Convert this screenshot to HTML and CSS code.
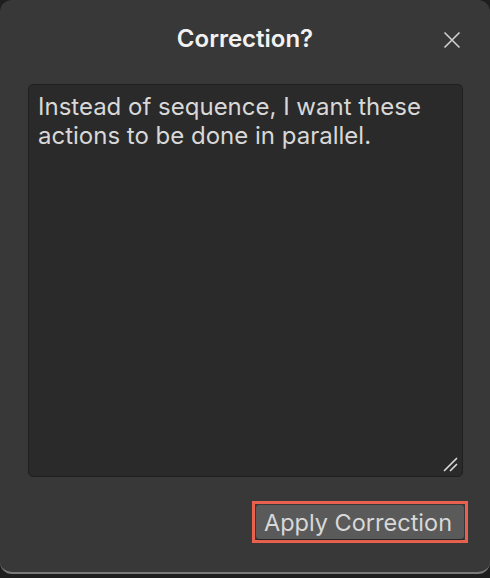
FILE: index.html
```html
<!DOCTYPE html>
<html>
<head>
<meta charset="utf-8">
<link rel="stylesheet" href="styles.css">
</head>
<body>
<div class="dialog">
  <div class="header">
    <h1 class="title">Correction?</h1>
    <button class="close" aria-label="Close">
      <svg width="18" height="18" viewBox="0 0 18 18"><path d="M1.5 1.5 L16.5 16.5 M16.5 1.5 L1.5 16.5" stroke="#cfcfcf" stroke-width="1.6" fill="none"/></svg>
    </button>
  </div>
  <div class="content">
    <div class="field">
      <div class="text">Instead of sequence, I want these actions to be done in parallel.</div>
      <svg class="grip" width="15" height="15" viewBox="0 0 15 15"><path d="M1.5 13.5 L13.5 1.5 M7.5 13.5 L13.5 7.5" stroke="#d8d8d8" stroke-width="1.7" stroke-linecap="round" fill="none"/></svg>
    </div>
  </div>
  <div class="footer">
    <div class="focus">
      <button class="apply">Apply Correction</button>
    </div>
  </div>
</div>
</body>
</html>
```

FILE: styles.css
```css
html, body {
  margin: 0;
  padding: 0;
  background: #1e1e1e;
  width: 490px;
  height: 578px;
  overflow: hidden;
}
.dialog {
  box-sizing: border-box;
  width: 490px;
  height: 574px;
  background: #383838;
  border-radius: 12px;
  border-bottom: 2px solid #7a7a7a;
  display: flex;
  flex-direction: column;
  font-family: Inter, "Noto Sans", sans-serif;
}
.header {
  height: 79px;
  display: flex;
  align-items: center;
  justify-content: center;
  position: relative;
  box-sizing: border-box;
  padding-bottom: 2px;
}
.title {
  margin: 0;
  font-size: 24px;
  font-weight: 600;
  color: #f2f2f2;
}
.close {
  position: absolute;
  right: 29px;
  top: 31px;
  width: 18px;
  height: 18px;
  padding: 0;
  border: 0;
  background: none;
  display: flex;
}
.content {
  padding: 5px 27px 0 28px;
}
.field {
  box-sizing: border-box;
  height: 393px;
  background: #2a2a2a;
  border: 1px solid #1f1f1f;
  border-radius: 5px;
  position: relative;
  padding: 7px 9px;
}
.text {
  font-size: 24px;
  line-height: 29px;
  color: #d8d8d8;
}
.grip {
  position: absolute;
  right: 4px;
  bottom: 4px;
}
.footer {
  display: flex;
  justify-content: flex-end;
  padding: 24px 22px 0 0;
}
.focus {
  border: 3px solid #e8614f;
  padding: 1px;
  display: flex;
}
.apply {
  height: 34px;
  width: 208px;
  padding: 0 0 0 2px;
  text-align: left;
  text-indent: 6px;
  background: #5a5a5a;
  border: 0;
  border-radius: 3px;
  color: #d8d8d8;
  font-family: Inter, "Noto Sans", sans-serif;
  font-size: 23.5px;
  box-shadow: 0 1px 1px rgba(0,0,0,0.35);
}
```
